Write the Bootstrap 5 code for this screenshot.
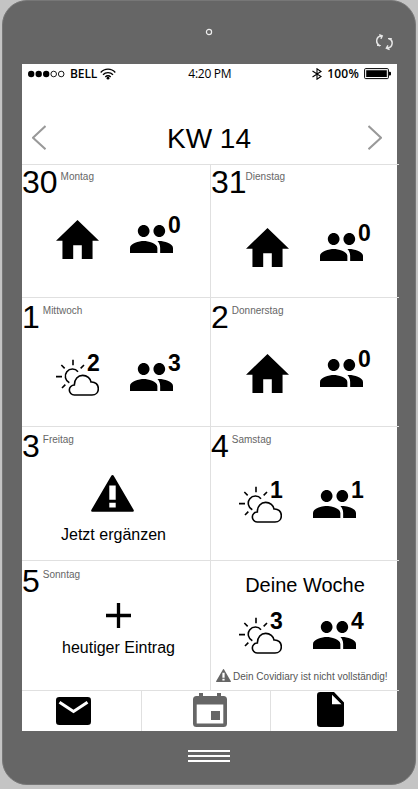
<!DOCTYPE html>
<html lang="de">
<head>
<meta charset="utf-8">
<meta name="viewport" content="width=device-width, initial-scale=1">
<title>Covidiary – KW 14</title>
<link href="https://cdn.jsdelivr.net/npm/bootstrap@5.3.0/dist/css/bootstrap.min.css" rel="stylesheet">
<style>
body{background:#c4c4c4;font-family:"Liberation Sans",Arial,sans-serif;color:#000;width:418px;height:789px;overflow:hidden}
svg{display:block;flex:none}
.phone{width:414px;height:785px;margin-left:2px;background:#666;border:1px solid #777;border-radius:25px}
.bezel-top{height:63px;padding:27px 22px 0 202px}
.screen{width:375px;height:667px;margin-left:19px;background:#fff}
.status{height:22px;padding:0 6px 2px 6px;font:12px/20px "Open Sans",sans-serif}
.status .strong{font-weight:600}
.carrier{margin-left:5px;letter-spacing:-.1px}
.clock{margin-left:72px;width:44px;letter-spacing:-.25px}
.pct{margin:0 5px 0 5px;letter-spacing:.2px}
.title-row{height:78px;padding:20px 15px 0 10px}
.title-row h1{font-size:28px;line-height:32px;margin:17px 0 0 4px}
.title-row svg{margin-top:19px}
.week{display:grid;grid-template-columns:188px 189px;grid-template-rows:133px 129px 134px 130px;width:377px}
.day{border-top:1px solid #e0e0e0;--pad:1px}
.day:nth-child(even) .inner{border-left:1px solid #e0e0e0}
.r2,.r3{--pad:3px}.r4{--pad:4px}
.inner{height:100%}
.date{height:34px;padding-top:var(--pad);gap:3px}
.num{font-size:32px;line-height:32px}
.lbl{font-size:10px;line-height:12px;color:#666;margin-top:5px}
.r2 .lbl,.r3 .lbl,.r4 .lbl{margin-top:4px}
.pics{height:40px;gap:31px;margin-left:34px}
.day:nth-child(even) .pics{margin-left:35px}
.day.shift .pics{margin-left:28px}
.pic{width:43px;height:40px}
.count{position:absolute;left:38px;top:-6px;font-size:23px;line-height:24px;font-weight:700}
.sun .count{left:31px}
.action{font-size:16px;line-height:20px}
.sum{font-size:20px;line-height:24px}
.hint{font-size:10px;line-height:12px;color:#555}
.tabs{width:377px;height:41px;border-top:1px solid #e0e0e0;display:grid;grid-template-columns:119px 129px 129px}
.tabs a+a{border-left:1px solid #e0e0e0}
.tabs a{height:40px}
.bars{width:42px;margin:19px 0 0 185px;gap:3px}
.bars i{height:2px;background:#fff}
.mt20{margin-top:20px}.mt28{margin-top:28px}.mt25{margin-top:25px}.mt21{margin-top:21px}.mt23{margin-top:23px}
</style>
<script src="https://cdn.jsdelivr.net/npm/bootstrap@5.3.0/dist/js/bootstrap.bundle.min.js"></script>
</head>
<body>
<svg width="0" height="0" class="position-absolute">
<symbol id="home" viewBox="2 3 20 17" preserveAspectRatio="none"><path d="M10 20v-6h4v6h5v-8h3L12 3 2 12h3v8z"/></symbol>
<symbol id="people" viewBox="1 5 22 14" preserveAspectRatio="none"><path d="M16 11c1.66 0 2.99-1.34 2.99-3S17.66 5 16 5c-1.66 0-3 1.34-3 3s1.34 3 3 3zm-8 0c1.66 0 2.99-1.34 2.99-3S9.66 5 8 5C6.34 5 5 6.34 5 8s1.34 3 3 3zm0 2c-2.33 0-7 1.17-7 3.5V19h14v-2.5c0-2.33-4.67-3.5-7-3.5zm8 0c-.29 0-.62.02-.97.05.8.84 1.400 1.970 1.400 3.450V19H23v-2.5c0-2.33-4.67-3.500-7-3.500z"/></symbol>
<symbol id="sun" viewBox="168 188 129 111"><g fill="none" stroke="#000" stroke-width="4.800"><path d="M223 296a15 15 0 0 1 0-30c0-18 11-29 25-29 13 0 24 9 25 20 13-1 22 8 22 20 0 11-8 19-19 19z"/><path d="M208 259A21.500 21.500 0 1 1 234 226M168 241h18M184 206l10 10M219 190v17M252 206l-10 10M186 275l10-10"/></g></symbol>
<symbol id="warn" viewBox="0 0 43 37" preserveAspectRatio="none"><path fill-rule="evenodd" d="M21.500 0q.8 0 1.200.8L42.700 35q.6 1.600-1 1.700H1.300Q-.3 36.600.3 35L20.300.8q.4-.8 1.200-.8zM18.300 10.500v14.300h6.400V10.500zM18.300 27.800v4.600h6.400v-4.600z"/></symbol>
</svg>

<main class="phone">
  <div class="bezel-top d-flex justify-content-between">
    <svg width="8" height="8" viewBox="0 0 8 8"><circle cx="4" cy="4" r="2.600" fill="none" stroke="#eee" stroke-width="1.200"/></svg>
    <svg class="mt-1" width="17" height="20" viewBox="0 0 17 20"><g fill="none" stroke="#e6e6e6" stroke-width="1.500"><path d="M3.800 14C-.8 11.500-.4 4.500 5.500 4M3.200 2.600l3 1.300-1.300 2.800M13 6.500c4.800 2 4 9-1.800 9.500M13.600 17.600l-3.200-1.500 1.600-2.800"/><path d="M1 13.500h3.800M12 6.700h3.800" stroke-width="1.200"/></g></svg>
  </div>

  <section class="screen">
    <div class="status d-flex align-items-center">
      <svg width="37" height="8" viewBox="0 0 37 8"><circle cx="3.200" cy="4" r="3.200"/><circle cx="10.700" cy="4" r="3.200"/><circle cx="18.200" cy="4" r="3.200"/><g fill="none" stroke="#000" stroke-width=".9"><circle cx="25.700" cy="4" r="2.800"/><circle cx="33.200" cy="4" r="2.800"/></g></svg>
      <span class="carrier strong">BELL</span>
      <svg width="16" height="12" viewBox="0 0 16 12" class="wifi" style="margin-left:3px"><g fill="none" stroke="#000" stroke-width="1.300"><path d="M.7 4.500C4.500.1 11.500.1 15.300 4.500M3 6.800c2.700-3 7.300-3 10 0M5.300 9c1.500-1.700 3.900-1.700 5.400 0"/></g><circle cx="8" cy="10.200" r="1.400"/></svg>
      <span class="clock text-nowrap">4:20 PM</span>
      <svg class="ms-auto" width="10" height="12" viewBox="0 0 10 12"><path d="M.5 3l8.500 5.500L5 11.200V.8l4 2.700L.5 9" fill="none" stroke="#000" stroke-width="1.100"/></svg>
      <span class="strong pct">100%</span>
      <svg width="27" height="12" viewBox="0 0 27 12"><rect x=".6" y=".6" width="23.800" height="10" rx="1" fill="none" stroke="#000"/><path d="M2.200 2.200h20.600v6.900H2.200zM25 3.800h1q1 0 1 1v1.800q0 1-1 1h-1z"/></svg>
    </div>
    <header class="title-row d-flex justify-content-between align-items-start">
      <svg width="14" height="25" viewBox="0 0 14 25"><path d="M13.500 1L1 12.700l12.500 11.500" fill="none" stroke="#999" stroke-width="2"/></svg>
      <h1 class="fw-normal">KW 14</h1>
      <svg width="14" height="25" viewBox="0 0 14 25"><path d="M.5 1L13 12.700.5 24.200" fill="none" stroke="#999" stroke-width="2"/></svg>
    </header>

    <div class="week">
      <article class="day r1"><div class="inner">
        <div class="date d-flex align-items-start"><span class="num">30</span><span class="lbl">Montag</span></div>
        <div class="pics d-flex mt20">
          <div class="pic d-flex align-items-center"><svg width="43" height="39"><use href="#home"/></svg></div>
          <div class="pic d-flex align-items-center position-relative"><svg width="43" height="28"><use href="#people"/></svg><b class="count">0</b></div>
        </div></div></article>
      <article class="day r1"><div class="inner">
        <div class="date d-flex align-items-start gap-0"><span class="num">31</span><span class="lbl" style="margin-left:-1px">Dienstag</span></div>
        <div class="pics d-flex mt28">
          <div class="pic d-flex align-items-center"><svg width="43" height="39"><use href="#home"/></svg></div>
          <div class="pic d-flex align-items-center position-relative"><svg width="43" height="28"><use href="#people"/></svg><b class="count">0</b></div>
        </div></div></article>

      <article class="day r2"><div class="inner">
        <div class="date d-flex align-items-start"><span class="num">1</span><span class="lbl">Mittwoch</span></div>
        <div class="pics d-flex mt25">
          <div class="pic sun d-flex align-items-center position-relative"><svg width="43" height="37"><use href="#sun"/></svg><b class="count">2</b></div>
          <div class="pic d-flex align-items-center position-relative"><svg width="43" height="28"><use href="#people"/></svg><b class="count">3</b></div>
        </div></div></article>
      <article class="day r2"><div class="inner">
        <div class="date d-flex align-items-start"><span class="num">2</span><span class="lbl">Donnerstag</span></div>
        <div class="pics d-flex mt21">
          <div class="pic d-flex align-items-center"><svg width="43" height="39"><use href="#home"/></svg></div>
          <div class="pic d-flex align-items-center position-relative"><svg width="43" height="28"><use href="#people"/></svg><b class="count">0</b></div>
        </div></div></article>

      <article class="day r3"><div class="inner">
        <div class="date d-flex align-items-start"><span class="num">3</span><span class="lbl">Freitag</span></div>
        <div class="d-flex flex-column align-items-center" style="width:183px;padding-top:14px">
          <svg width="43" height="37" style="margin-right:2px"><use href="#warn"/></svg>
          <span class="action" style="margin-top:13px">Jetzt ergänzen</span>
        </div></div></article>
      <article class="day r3 shift"><div class="inner">
        <div class="date d-flex align-items-start"><span class="num">4</span><span class="lbl">Samstag</span></div>
        <div class="pics d-flex mt23">
          <div class="pic sun d-flex align-items-center position-relative"><svg width="43" height="37"><use href="#sun"/></svg><b class="count">1</b></div>
          <div class="pic d-flex align-items-center position-relative"><svg width="43" height="28"><use href="#people"/></svg><b class="count">1</b></div>
        </div></div></article>

      <article class="day r4"><div class="inner">
        <div class="date d-flex align-items-start"><span class="num">5</span><span class="lbl">Sonntag</span></div>
        <div class="d-flex flex-column align-items-center" style="width:193px;padding-top:8px">
          <svg width="25" height="25" viewBox="0 0 25 25"><path d="M0 12.500h25M12.500 0v25" stroke="#000" stroke-width="3.300"/></svg>
          <span class="action" style="margin-top:10px">heutiger Eintrag</span>
        </div></div></article>
      <article class="day r4 shift"><div class="inner">
        <div class="sum text-center" style="padding-top:12px">Deine Woche</div>
        <div class="pics d-flex" style="margin-top:18px">
          <div class="pic sun d-flex align-items-center position-relative"><svg width="43" height="37"><use href="#sun"/></svg><b class="count">3</b></div>
          <div class="pic d-flex align-items-center position-relative"><svg width="43" height="28"><use href="#people"/></svg><b class="count">4</b></div>
        </div>
        <div class="hint d-flex" style="margin:14px 0 0 5px"><svg width="15" height="13" fill="#666"><use href="#warn"/></svg><span class="text-nowrap" style="margin:2px 0 0 2px">Dein Covidiary ist nicht vollständig!</span></div>
      </div></article>
    </div>

    <nav class="tabs">
      <a style="padding:6px 0 0 34px"><svg width="35" height="28" viewBox="0 0 35 28"><rect width="35" height="28" rx="3.300"/><path d="M3.500 5.200l14 9.300 14-9.300" fill="none" stroke="#fff" stroke-width="3"/></svg></a>
      <a style="padding:2px 0 0 51px"><svg width="34" height="34" viewBox="0 0 34 34" fill="#666"><path fill-rule="evenodd" d="M6 0h4v3h14V0h4v3h2.500Q34 3 34 6.500v24q0 3.500-3.500 3.500h-27Q0 34 0 30.500v-24Q0 3 3.500 3H6zM3.700 11.500v19h26.600v-19z"/><path d="M18 18h9v9h-9z"/></svg></a>
      <a style="padding:1px 0 0 46px"><svg width="27" height="35" viewBox="0 0 27 35"><path fill-rule="evenodd" d="M3.300 0H17l10 10.500v21.200q0 3.300-3.300 3.300H3.300Q0 35 0 31.700V3.300Q0 0 3.300 0zM15 2.800v9.400h9.500z"/></svg></a>
    </nav>
  </section>
  <div class="bars d-flex flex-column"><i></i><i></i><i></i></div>
</main>
</body>
</html>
